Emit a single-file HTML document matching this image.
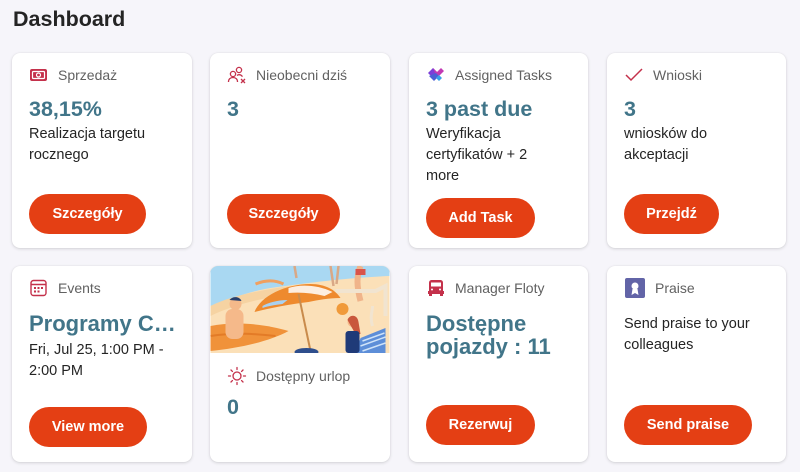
<!DOCTYPE html>
<html><head><meta charset="utf-8"><style>
*{margin:0;padding:0;box-sizing:border-box}
body{width:800px;height:472px;background:#f6f5fa;font-family:"Liberation Sans",sans-serif;position:relative;overflow:hidden}
h1{position:absolute;left:13px;top:7px;font-size:21.5px;font-weight:bold;color:#242424}
.card{position:absolute;background:#fff;border-radius:8px;box-shadow:0 1px 3px rgba(0,0,0,.14),0 0 1px rgba(0,0,0,.1);overflow:hidden}
.hd{position:absolute;left:17px;top:12px;height:20px;display:flex;align-items:center;font-size:14px;color:#616161}
.hd svg{margin-right:9px;flex:none}
.val{position:absolute;left:17px;font-size:21.5px;font-weight:bold;color:#417589;line-height:24px}
.txt{position:absolute;left:17px;font-size:14.5px;color:#242424;line-height:21px}
.btn{position:absolute;left:17px;height:40px;border-radius:20px;background:#e43f14;color:#fff;font-weight:bold;font-size:14.5px;display:flex;align-items:center;justify-content:center}
</style></head><body>
<h1>Dashboard</h1>

<div class="card" style="left:12px;top:53px;width:180px;height:195px">
<div class="hd"><svg width="20" height="16" viewBox="0 0 20 16"><rect x="1" y="2" width="17" height="12" rx="2" fill="#c4314b"/><rect x="3.5" y="4.5" width="12" height="7" rx="1" fill="none" stroke="#fff" stroke-width="1.2"/><circle cx="9.5" cy="8" r="2" fill="none" stroke="#fff" stroke-width="1.2"/></svg>Sprzedaż</div>
<div class="val" style="top:44px">38,15%</div>
<div class="txt" style="top:71px">Realizacja targetu<br>rocznego</div>
<div class="btn" style="top:141px;width:117px">Szczegóły</div>
</div>

<div class="card" style="left:210px;top:53px;width:180px;height:195px">
<div class="hd"><svg width="20" height="18" viewBox="0 0 20 18"><g fill="none" stroke="#c4314b" stroke-width="1.3"><circle cx="12" cy="4" r="2.6"/><circle cx="6" cy="8" r="2.6"/><path d="M1.5 16c0-3 2-4.5 4.5-4.5s4.5 1.5 4.5 4.5"/><path d="M10 9.5c.6-.5 1.3-.8 2-.8 1.5 0 2.8.8 3.4 2"/><path d="M14 13l4 4M18 13l-4 4"/></g></svg>Nieobecni dziś</div>
<div class="val" style="top:44px">3</div>
<div class="btn" style="top:141px;width:113px">Szczegóły</div>
</div>

<div class="card" style="left:409px;top:53px;width:179px;height:195px">
<div class="hd"><svg width="20" height="18" viewBox="0 0 20 18"><path d="M2 7l5-5 4 4-5 5z" fill="#7b3fd8"/><path d="M7 2l4 4 4-4 3 3-7 7z" fill="#c239b3"/><path d="M3 10l5 5 5-5-3-3z" fill="#4c5fd4"/><path d="M10 12l3-3 3 3-3 3z" fill="#3aa0e8"/></svg>Assigned Tasks</div>
<div class="val" style="top:44px">3 past due</div>
<div class="txt" style="top:71px">Weryfikacja<br>certyfikatów + 2<br>more</div>
<div class="btn" style="top:145px;width:109px">Add Task</div>
</div>

<div class="card" style="left:607px;top:53px;width:179px;height:195px">
<div class="hd"><svg width="20" height="16" viewBox="0 0 20 16"><path d="M2 8l5 5L18 2" fill="none" stroke="#c4314b" stroke-width="1.5"/></svg>Wnioski</div>
<div class="val" style="top:44px">3</div>
<div class="txt" style="top:71px">wniosków do<br>akceptacji</div>
<div class="btn" style="top:141px;width:95px">Przejdź</div>
</div>

<div class="card" style="left:12px;top:266px;width:180px;height:196px">
<div class="hd"><svg width="20" height="18" viewBox="0 0 20 18"><rect x="2" y="1.5" width="15" height="15" rx="2.5" fill="none" stroke="#c4314b" stroke-width="1.4"/><path d="M2 5.5h15" stroke="#c4314b" stroke-width="1.4"/><g fill="#c4314b"><rect x="5" y="8" width="2" height="2"/><rect x="8.5" y="8" width="2" height="2"/><rect x="12" y="8" width="2" height="2"/><rect x="5" y="11.5" width="2" height="2"/><rect x="8.5" y="11.5" width="2" height="2"/></g></svg>Events</div>
<div class="val" style="top:46px;font-size:22px">Programy C…</div>
<div class="txt" style="top:74px">Fri, Jul 25, 1:00 PM -<br>2:00 PM</div>
<div class="btn" style="top:141px;width:118px">View more</div>
</div>

<div class="card" style="left:210px;top:266px;width:180px;height:196px">
<svg width="180" height="87" viewBox="0 0 179 87" style="position:absolute;left:0;top:0">
<rect width="179" height="87" fill="#fbe0b8"/>
<path d="M0 0h179v10C130 12 90 18 60 22 35 26 15 35 0 40z" fill="#a9d8f2"/>
<path d="M0 40C20 30 50 24 80 20L80 28C50 32 20 40 0 50z" fill="#f6d3a2"/>
<path d="M45 18c10-4 20-4 28 0" stroke="#f0a060" stroke-width="3" fill="none"/>
<path d="M120 0l3 20M128 0l-2 18M84 0l2 12" stroke="#d9a886" stroke-width="2.5"/>
<path d="M150 0c-4 10-4 20 0 35" stroke="#f0b48a" stroke-width="6" fill="none"/>
<rect x="145" y="3" width="10" height="6" fill="#d9544a"/>
<path d="M125 25h40l10-5v30" stroke="#f1e4d0" stroke-width="4" fill="none"/>
<path d="M44 46C50 30 75 18 100 18 115 18 125 24 130 32 118 32 108 34 98 36 80 38 60 42 44 46z" fill="#ee8a2e"/>
<path d="M78 22c12-4 30-3 44 4l-8 4c-12-3-24-4-36-3z" fill="#fff" opacity=".85"/>
<path d="M52 40c5-3 15-6 25-6l-5 4c-8 1-14 2-20 4z" fill="#a9d1f0"/>
<path d="M88 28l12 57" stroke="#c98b4c" stroke-width="2"/>
<ellipse cx="96" cy="86" rx="12" ry="4" fill="#2e4e8c"/>
<path d="M0 60c25-5 55-2 78 5C60 75 30 82 0 85z" fill="#f0923a"/>
<path d="M0 70c25-4 45-2 65 0" stroke="#e37b27" stroke-width="2" fill="none"/>
<rect x="15" y="43" width="18" height="30" rx="7" fill="#f5b98a"/>
<circle cx="25" cy="38" r="6" fill="#f5b98a"/>
<path d="M19 34c3-4 10-4 12 1z" fill="#27406e"/>
<circle cx="132" cy="43" r="6" fill="#f09a3a"/>
<path d="M150 72l25-10v25h-30z" fill="#5d8ed8"/>
<path d="M152 75l22-8M150 80l25-9M152 85l23-8" stroke="#cfe3f8" stroke-width="1.5"/>
<circle cx="142" cy="56" r="5" fill="#f5b98a"/>
<path d="M137 54c2-6 10-6 11 2l2 12h-5z" fill="#c9573c"/>
<rect x="135" y="65" width="14" height="22" rx="3" fill="#1f3a78"/>
<path d="M162 40c0 6-3 10 0 20" stroke="#f1e4d0" stroke-width="3" fill="none"/>
</svg>
<div class="hd" style="top:100px"><svg width="20" height="20" viewBox="0 0 20 20"><circle cx="10" cy="10" r="4" fill="none" stroke="#c4314b" stroke-width="1.3"/><g stroke="#c4314b" stroke-width="1.3" stroke-linecap="round"><path d="M10 1.5v2M10 16.5v2M1.5 10h2M16.5 10h2M4 4l1.4 1.4M14.6 14.6L16 16M4 16l1.4-1.4M14.6 5.4L16 4"/></g></svg>Dostępny urlop</div>
<div class="val" style="top:129px">0</div>
</div>

<div class="card" style="left:409px;top:266px;width:179px;height:196px">
<div class="hd"><svg width="20" height="18" viewBox="0 0 20 18"><path d="M3 4c0-2 1-3 3-3h8c2 0 3 1 3 3v9H3z" fill="#c4314b"/><rect x="2" y="12" width="16" height="3" fill="#c4314b"/><rect x="3" y="14" width="3" height="3" fill="#c4314b"/><rect x="14" y="14" width="3" height="3" fill="#c4314b"/><rect x="5" y="3.5" width="10" height="4" fill="#fff"/><circle cx="6" cy="10.5" r="1" fill="#fff"/><circle cx="14" cy="10.5" r="1" fill="#fff"/></svg>Manager Floty</div>
<div class="val" style="top:46px;font-size:22px;line-height:23px">Dostępne<br>pojazdy : 11</div>
<div class="btn" style="top:139px;width:109px">Rezerwuj</div>
</div>

<div class="card" style="left:607px;top:266px;width:179px;height:196px">
<div class="hd"><svg width="22" height="22" viewBox="0 0 22 22" style="margin-right:9px"><rect x="1" y="1" width="20" height="20" rx="2" fill="#6264a7"/><circle cx="11" cy="9" r="3.5" fill="#fff"/><path d="M8.5 12l-1 6 3.5-2 3.5 2-1-6" fill="#fff"/></svg>Praise</div>
<div class="txt" style="top:48px">Send praise to your<br>colleagues</div>
<div class="btn" style="top:139px;width:128px">Send praise</div>
</div>
</body></html>
